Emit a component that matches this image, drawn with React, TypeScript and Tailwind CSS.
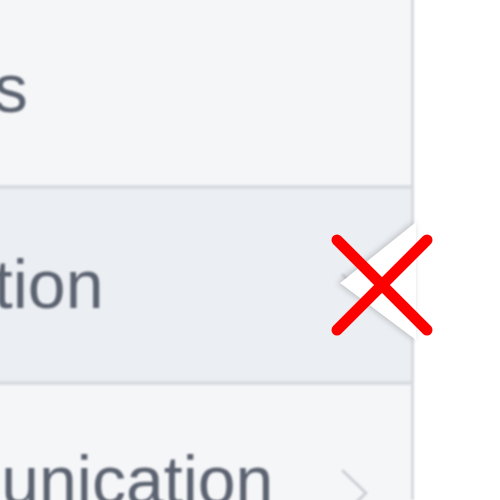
import React from "react";

type Row = { label: string; active?: boolean; chevron?: boolean };

const ROWS: Row[] = [
  { label: "Profiles" },
  { label: "Education", active: true, chevron: true },
  { label: "Communication", chevron: true },
];

export default function App() {
  return (
    <div className="relative flex w-[500px] h-[500px] overflow-hidden bg-white font-['Liberation_Sans',Arial,sans-serif]">
      {/* List panel (cropped view) */}
      <div className="-ml-[199px] -mt-[7px] w-[613px] shrink-0 flex flex-col bg-[#f5f6f8] border-r-[3px] border-[#d6d9de] shadow-[inset_-5px_0_6px_rgba(0,0,0,0.04)] blur-[1.2px]">
        {ROWS.map((row) => (
          <div
            key={row.label}
            className={`relative flex h-[196px] shrink-0 items-center justify-between border-b-4 border-[#d9dce1] pb-[3px] pr-[41px] ${
              row.active ? "bg-[#ebeef2]" : "bg-[#f5f6f8]"
            }`}
          >
            <span className="whitespace-nowrap text-[68px] leading-none text-[#5b6270]">
              {row.label}
            </span>
            {row.chevron && (
              <svg width="30" height="48" viewBox="0 0 30 48" className="mt-[27px]">
                <path d="M3 2 L26 24 L3 46" fill="none" stroke="#cbcfd5" strokeWidth="3" strokeLinecap="round" strokeLinejoin="round" />
              </svg>
            )}
          </div>
        ))}
      </div>

      {/* Detail pane pointer notch */}
      <svg
        width="80"
        height="124"
        viewBox="0 0 80 124"
        className="absolute left-[338px] top-[219px] drop-shadow-[-2px_0_3px_rgba(0,0,0,0.22)]"
      >
        <polygon points="78,3 2,64 78,121" fill="#ffffff" />
      </svg>

      {/* Red cross annotation */}
      <svg width="110" height="110" viewBox="0 0 110 110" className="absolute left-[327px] top-[230px]">
        <g stroke="#ff0000" strokeWidth="11" strokeLinecap="round">
          <line x1="10" y1="10" x2="100" y2="100" />
          <line x1="100" y1="10" x2="10" y2="100" />
        </g>
      </svg>
    </div>
  );
}
